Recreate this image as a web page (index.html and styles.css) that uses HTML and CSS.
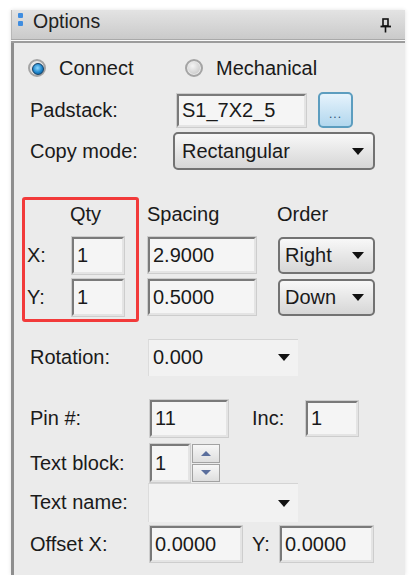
FILE: index.html
```html
<!DOCTYPE html>
<html>
<head>
<meta charset="utf-8">
<link rel="stylesheet" href="styles.css">
</head>
<body>
<div class="panel">
  <div class="titlebar">
    <span class="grip"><i></i><i></i></span>
    <span class="title">Options</span>
    <svg class="pin" width="12" height="15" viewBox="0 0 12 15">
      <rect x="3" y="1" width="5" height="7" fill="none" stroke="#111" stroke-width="1.6"/>
      <line x1="0.5" y1="8.5" x2="11" y2="8.5" stroke="#111" stroke-width="1.8"/>
      <line x1="5.5" y1="9" x2="5.5" y2="14.5" stroke="#111" stroke-width="1.6"/>
    </svg>
  </div>
  <div class="sep"></div>
  <div class="content">
    <div class="row r-radio">
      <label class="opt opt-first"><span class="radio checked"></span>Connect</label>
      <label class="opt"><span class="radio"></span>Mechanical</label>
    </div>
    <div class="row r-pad">
      <span class="label w147">Padstack:</span>
      <span class="field f-pad">S1_7X2_5</span>
      <span class="dots">...</span>
    </div>
    <div class="row r-copy">
      <span class="label w143">Copy mode:</span>
      <span class="dd f-copy">Rectangular<i class="arrow"></i></span>
    </div>
    <div class="row r-head">
      <span class="c-lab"></span>
      <span class="c-qty head-qty">Qty</span>
      <span class="c-sp">Spacing</span>
      <span class="c-ord">Order</span>
    </div>
    <div class="row r-x">
      <span class="c-lab axis">X:</span>
      <span class="c-qty"><span class="field f-qty">1</span></span>
      <span class="c-sp"><span class="field f-sp">2.9000</span></span>
      <span class="c-ord"><span class="dd f-ord">Right<i class="arrow"></i></span></span>
    </div>
    <div class="row r-y">
      <span class="c-lab axis">Y:</span>
      <span class="c-qty"><span class="field f-qty">1</span></span>
      <span class="c-sp"><span class="field f-sp">0.5000</span></span>
      <span class="c-ord"><span class="dd f-ord">Down<i class="arrow"></i></span></span>
    </div>
    <div class="row r-rot">
      <span class="label w118">Rotation:</span>
      <span class="combo">0.000<i class="arrow"></i></span>
    </div>
    <div class="row r-pin">
      <span class="label w120">Pin #:</span>
      <span class="field f-pin">11</span>
      <span class="label w54 ml24">Inc:</span>
      <span class="field f-inc">1</span>
    </div>
    <div class="row r-tb">
      <span class="label w120">Text block:</span>
      <span class="field f-tb">1</span>
      <span class="spin"><span><i class="up"></i></span><span><i class="down"></i></span></span>
    </div>
    <div class="row r-tn">
      <span class="label w118">Text name:</span>
      <span class="combo combo-tn"><i class="arrow"></i></span>
    </div>
    <div class="row r-off">
      <span class="label w120">Offset X:</span>
      <span class="field f-off">0.0000</span>
      <span class="label w28 ml10">Y:</span>
      <span class="field f-off2">0.0000</span>
    </div>
  </div>
  <div class="highlight"></div>
</div>
</body>
</html>
```
FILE: styles.css
```css
* { box-sizing: border-box; }
body {
  margin: 0;
  background: #ffffff;
  font-family: "Liberation Sans", Arial, sans-serif;
  color: #1a1a1a;
}
.panel {
  position: relative;
  margin: 10px 0 0 11px;
  width: 394px;
  height: 565px;
  background: #ebebeb;
  box-shadow: 0 0 4px rgba(0,0,0,0.12);
  display: flex;
  flex-direction: column;
}
.titlebar {
  height: 29px;
  display: flex;
  align-items: flex-start;
  padding: 1px 0 0 6px;
  background: linear-gradient(#e3e3e3, #cacaca);
  border-left: 1px solid #b8b8b8;
}
.grip {
  display: flex;
  flex-direction: column;
  gap: 3px;
  margin-top: 2px;
  width: 5px;
}
.grip i {
  display: block;
  width: 5px;
  height: 5px;
  background: #3f8de0;
  border-radius: 1px;
}
.title {
  font-size: 19.5px;
  line-height: 20px;
  margin-left: 10px;
  color: #222;
}
.pin {
  margin-left: auto;
  margin-right: 13px;
  margin-top: 7px;
}
.sep {
  height: 4px;
  background: linear-gradient(#a9a9a9 0 1px, #fafafa 1px 2px, #9c9c9c 2px 4px);
}
.content {
  flex: 1;
  border-left: 3px solid #8e8e8e;
  padding: 0 0 0 16px;
  display: flex;
  flex-direction: column;
  font-size: 20px;
}
.row {
  display: flex;
  align-items: center;
  flex: none;
}
.label { flex: none; white-space: nowrap; }
.w147 { width: 147px; }
.w143 { width: 143px; }
.w118 { width: 118px; }
.w120 { width: 120px; }
.w54 { width: 54px; }
.w28 { width: 28px; }
.ml24 { margin-left: 24px; }
.ml10 { margin-left: 10px; }

/* rows */
.r-radio { margin-top: 11px; height: 28px; }
.r-pad { margin-top: 8px; height: 40px; }
.r-copy { margin-top: 1px; height: 40px; }
.r-head { margin-top: 34px; height: 18px; line-height: 18px; }
.r-x { margin-top: 12px; height: 40px; }
.r-y { margin-top: 2px; height: 40px; }
.r-rot { margin-top: 21px; height: 38px; }
.r-pin { margin-top: 24px; height: 37px; }
.r-tb { margin-top: 7px; height: 38px; }
.r-tn { margin-top: 1px; height: 39px; }
.r-off { margin-top: 4px; height: 36px; }

/* radios */
.opt {
  display: flex;
  align-items: center;
  gap: 13px;
}
.opt-first { width: 157px; margin-left: -2px; }
.radio {
  position: relative;
  width: 18px;
  height: 18px;
  border-radius: 50%;
  border: 2px solid #a4a4a4;
  background: radial-gradient(circle at 40% 35%, #f4f4f4, #cdcdcd 70%, #b8b8b8);
  box-shadow: inset 0 0 0 1px #e8e8e8;
  flex: none;
}
.radio.checked::after {
  content: "";
  position: absolute;
  left: 2px;
  top: 2px;
  width: 10px;
  height: 10px;
  border-radius: 50%;
  background: radial-gradient(circle at 45% 40%, #8fd8ff, #1e86cc 55%, #0b4f86);
  border: 1px solid #123f66;
}

/* text fields */
.field {
  display: flex;
  align-items: center;
  flex: none;
  background: #f5f5f5;
  border: 2px solid;
  border-color: #7a7a7a #e4e4e4 #e4e4e4 #7a7a7a;
  box-shadow: 0 0 0 1px #cdcdcd;
  padding-left: 3px;
  font-size: 20px;
  white-space: nowrap;
}
.f-pad { width: 129px; height: 33px; }
.f-qty { width: 52px; height: 37px; }
.f-sp { width: 108px; height: 36px; }
.f-pin { width: 78px; height: 37px; }
.f-inc { width: 52px; height: 35px; }
.f-tb { width: 40px; height: 38px; }
.f-off { width: 92px; height: 36px; }
.f-off2 { width: 93px; height: 36px; }

.dots {
  margin-left: 12px;
  width: 35px;
  height: 36px;
  border: 2px solid #5c9dbf;
  border-radius: 5px;
  background: linear-gradient(#e6f3fc, #b2d7ee);
  display: flex;
  align-items: flex-end;
  justify-content: center;
  padding-bottom: 6px;
  font-size: 12px;
  line-height: 12px;
  letter-spacing: 1px;
  color: #2c4f72;
}

/* dropdown buttons */
.dd {
  display: flex;
  align-items: center;
  justify-content: space-between;
  flex: none;
  border: 2px solid #727272;
  border-radius: 5px;
  background: linear-gradient(#f8f8f8, #d6d6d6);
  padding: 0 9px 0 7px;
  white-space: nowrap;
}
.f-copy { width: 202px; height: 38px; }
.f-ord { width: 97px; height: 37px; padding-left: 5px; }
.arrow {
  display: block;
  width: 0;
  height: 0;
  border-left: 6px solid transparent;
  border-right: 6px solid transparent;
  border-top: 7px solid #111;
}

/* flat combos */
.combo {
  display: flex;
  align-items: center;
  justify-content: space-between;
  width: 150px;
  height: 37px;
  background: #f2f2f2;
  border-top: 1px solid #d4d4d4;
  border-left: 1px solid #dcdcdc;
  padding: 0 8px 0 4px;
}
.combo-tn { height: 39px; justify-content: flex-end; }

/* qty grid columns */
.c-lab { width: 41px; flex: none; }
.c-qty { width: 77px; flex: none; display: flex; }
.c-sp { width: 130px; flex: none; display: flex; }
.c-ord { width: 97px; flex: none; display: flex; }
.axis { margin-left: -3px; margin-right: 3px; }
.head-qty { margin-left: -1px; }
.r-x .c-qty, .r-y .c-qty { padding-left: 1px; }

/* spinner */
.spin {
  display: flex;
  flex-direction: column;
  gap: 1px;
  margin-left: 2px;
  width: 28px;
  height: 38px;
}
.spin span {
  flex: 1;
  border: 1px solid #a2a2a2;
  background: linear-gradient(#f7f7f7, #dedede);
  display: flex;
  align-items: center;
  justify-content: center;
}
.spin .up {
  width: 0; height: 0;
  border-left: 5px solid transparent;
  border-right: 5px solid transparent;
  border-bottom: 5px solid #5a6e9c;
}
.spin .down {
  width: 0; height: 0;
  border-left: 5px solid transparent;
  border-right: 5px solid transparent;
  border-top: 5px solid #5a6e9c;
}

/* red annotation box */
.highlight {
  position: absolute;
  left: 11px;
  top: 187px;
  width: 117px;
  height: 125px;
  border: 3px solid #f23a3a;
  border-radius: 3px;
}
```
